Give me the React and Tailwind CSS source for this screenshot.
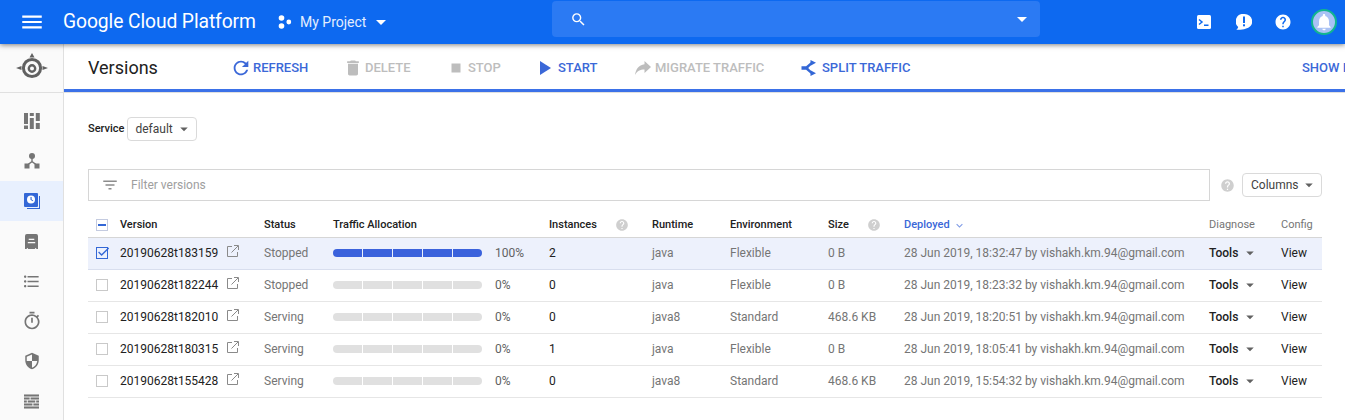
import { MdMenu, MdSearch, MdArrowDropDown, MdHelp, MdNotifications, MdRefresh, MdDelete, MdStop, MdPlayArrow, MdFilterList, MdFormatListBulleted, MdOutlineTimer, MdSecurity, MdCheck, MdKeyboardArrowDown } from "react-icons/md";

const versions = [
  { id: "20190628t183159", status: "Stopped", traffic: 100, inst: 2, runtime: "java", env: "Flexible", size: "0 B", date: "28 Jun 2019, 18:32:47", checked: true },
  { id: "20190628t182244", status: "Stopped", traffic: 0, inst: 0, runtime: "java", env: "Flexible", size: "0 B", date: "28 Jun 2019, 18:23:32" },
  { id: "20190628t182010", status: "Serving", traffic: 0, inst: 0, runtime: "java8", env: "Standard", size: "468.6 KB", date: "28 Jun 2019, 18:20:51" },
  { id: "20190628t180315", status: "Serving", traffic: 0, inst: 1, runtime: "java", env: "Flexible", size: "0 B", date: "28 Jun 2019, 18:05:41" },
  { id: "20190628t155428", status: "Serving", traffic: 0, inst: 0, runtime: "java8", env: "Standard", size: "468.6 KB", date: "28 Jun 2019, 15:54:32" },
];

const gridCols = "grid grid-cols-[32px_144px_69px_216px_103px_78px_98px_76px_305px_72px_41px] items-center";

function ProjectIcon() {
  return (
    <svg width="14" height="14" viewBox="0 0 14 14" fill="white">
      <circle cx="3.5" cy="3" r="2.8" />
      <circle cx="3.5" cy="11" r="2.8" />
      <circle cx="10.8" cy="7" r="2.4" />
    </svg>
  );
}

function TerminalIcon() {
  return (
    <svg width="14" height="14" viewBox="0 0 14 14">
      <rect width="14" height="14" rx="1.5" fill="white" />
      <path d="M2 4.5l3 2.5-3 2.5" fill="none" stroke="#0d69f0" strokeWidth="1.5" />
      <rect x="7" y="9.5" width="4.5" height="1.5" fill="#0d69f0" />
    </svg>
  );
}

function FeedbackIcon() {
  return (
    <svg width="16" height="16" viewBox="0 0 16 16">
      <path d="M8 0a8 7.4 0 0 1 1.5 14.7C7.5 15.6 4 16 0 15.8c1-.6 1.8-1.6 2.2-2.9A7.4 7.4 0 0 1 8 0z" fill="white" />
      <rect x="7" y="2.5" width="2" height="6.5" fill="#0d69f0" />
      <rect x="7" y="10.3" width="2" height="2" fill="#0d69f0" />
    </svg>
  );
}

function AppEngineLogo() {
  return (
    <svg width="34" height="30" viewBox="0 0 34 30" fill="#616161">
      <path d="M17 0l2.5 4.5h-5z" />
      <path d="M1 15l5.5-2v4z" />
      <path d="M33 15l-5.5-2v4z" />
      <circle cx="17" cy="15" r="8.6" fill="none" stroke="#616161" strokeWidth="3" />
      <circle cx="17" cy="15.5" r="3.2" fill="none" stroke="#616161" strokeWidth="2.4" />
    </svg>
  );
}

function DashboardIcon() {
  return (
    <svg width="16" height="16" viewBox="0 0 16 16" fill="#757575">
      <rect x="0" y="0" width="4" height="11" />
      <rect x="0" y="12.5" width="4" height="3.5" />
      <rect x="5.8" y="0" width="4" height="3" />
      <rect x="5.8" y="5" width="4" height="11" />
      <rect x="11.8" y="0" width="4" height="8" />
      <rect x="11.8" y="10" width="4" height="6" />
    </svg>
  );
}

function NodesIcon() {
  return (
    <svg width="16" height="16" viewBox="0 0 16 16" fill="#757575">
      <circle cx="8" cy="3" r="3" />
      <rect x="0.5" y="10.5" width="5" height="5" />
      <rect x="10.5" y="10.5" width="5" height="5" />
      <path d="M7.3 5h1.4v3.2l3.4 2.6-.9 1-3.2-2.4-3.2 2.4-.9-1 3.4-2.6z" />
    </svg>
  );
}

function VersionsIcon() {
  return (
    <svg width="16" height="16" viewBox="0 0 16 16">
      <path d="M15 3h1v13H3v-1h12z" fill="#3367d6" />
      <rect x="0" y="0" width="14" height="14" rx="1" fill="#3367d6" />
      <circle cx="7" cy="6.5" r="4" fill="white" />
      <path d="M6.5 4h1.1v2.4l1.7 1-.5.8-2.3-1.4z" fill="#3367d6" />
    </svg>
  );
}

function LogsIcon() {
  return (
    <svg width="13" height="15" viewBox="0 0 14 16" fill="#757575">
      <path d="M2 0h10a2 2 0 0 1 2 2v14h-1.6l-.9-1.2-1 1.2h-7l-1-1.2-.9 1.2H0V2a2 2 0 0 1 2-2z" />
      <rect x="4" y="5" width="6" height="1.4" fill="#fafafa" />
      <rect x="3" y="8.5" width="8" height="1.4" fill="#fafafa" />
    </svg>
  );
}

function WallIcon() {
  return (
    <svg width="15" height="15" viewBox="0 0 16 15" fill="#757575">
      <rect x="0" y="0" width="16" height="2.2" />
      <rect x="0" y="3.2" width="6" height="2.2" />
      <rect x="7" y="3.2" width="9" height="2.2" />
      <rect x="0" y="6.4" width="3" height="2.2" />
      <rect x="4" y="6.4" width="8" height="2.2" />
      <rect x="13" y="6.4" width="3" height="2.2" />
      <rect x="0" y="9.6" width="9" height="2.2" />
      <rect x="10" y="9.6" width="6" height="2.2" />
      <rect x="0" y="12.8" width="16" height="2.2" />
    </svg>
  );
}

function SplitIcon() {
  return (
    <svg width="16" height="16" viewBox="0 0 16 16" fill="#3367d6">
      <path d="M9.5 0L15 2.8 9.5 5.8z" />
      <path d="M9.5 10.2L15 13.2 9.5 16z" />
      <path d="M0.5 6.3h4.6l4.7-4 1.3 1.7L7.2 8l3.9 4-1.3 1.7-4.7-4H0.5z" />
    </svg>
  );
}

function MigrateIcon() {
  return (
    <svg width="16" height="14" viewBox="0 0 16 14" fill="#bdbdbd">
      <path d="M9.5 0L16 6l-6.5 6V8.4C5 8.4 2 10 0 14c.7-5.5 3.7-10.2 9.5-10.8z" />
    </svg>
  );
}

function ExternalIcon() {
  return (
    <svg width="12" height="12" viewBox="0 0 12 12" fill="none" stroke="#8a8a8a" strokeWidth="1" className="ml-[9px] mb-[3px]">
      <path d="M5 1.5H.5v10h10V7" />
      <path d="M4.5 7.5L11 1M7 .5h4.5V5" />
    </svg>
  );
}

function ActionButton({ icon, label, disabled, className }) {
  return (
    <div className={`flex items-center shrink-0 text-[13px] font-medium ${disabled ? "text-[#bdbdbd]" : "text-[#3b68d8]"} ${className}`}>
      {icon}
      <span>{label}</span>
    </div>
  );
}

function SideItem({ children, active }) {
  return (
    <div className={`h-10 shrink-0 flex items-center justify-center ${active ? "bg-[#e8f0fe]" : ""}`}>
      {children}
    </div>
  );
}

function TrafficBar({ percent, selected }) {
  const color = percent > 0 ? "bg-[#3b62dc]" : "bg-[#e0e0e0]";
  return (
    <div className={`flex w-[149px] h-2 rounded overflow-hidden gap-px ${selected ? "bg-[#edf1fc]" : "bg-white"}`}>
      {[0, 1, 2, 3, 4].map((i) => (
        <div key={i} className={`flex-1 ${color}`} />
      ))}
    </div>
  );
}

function Row({ v }) {
  return (
    <div className={`${gridCols} h-8 pb-[2px] border-b text-xs ${v.checked ? "bg-[#edf1fc] border-[#d8deee]" : "border-[#e6e6e6]"}`}>
      <div className="pl-2">
        {v.checked ? (
          <div className="relative w-3 h-3 border border-[#3367d6]">
            <MdCheck className="absolute -top-[4px] -left-[1px] text-[#3367d6]" size={15} />
          </div>
        ) : (
          <div className="w-3 h-3 border border-[#c9c9c9] bg-white" />
        )}
      </div>
      <div className="flex items-center text-[#212121]">
        {v.id}
        <ExternalIcon />
      </div>
      <div className="text-[#757575]">{v.status}</div>
      <div className="flex items-center">
        <TrafficBar percent={v.traffic} selected={v.checked} />
        <span className="ml-[13px] text-[#616161]">{v.traffic}%</span>
      </div>
      <div className="text-[#212121]">{v.inst}</div>
      <div className="text-[#757575]">{v.runtime}</div>
      <div className="text-[#757575]">{v.env}</div>
      <div className="text-[#757575]">{v.size}</div>
      <div className="text-[#757575] whitespace-nowrap">{v.date} by vishakh.km.94@gmail.com</div>
      <div className="flex items-center font-medium text-[#212121]">
        Tools
        <MdArrowDropDown size={18} className="ml-[3px] text-[#616161]" />
      </div>
      <div className="text-[#212121]">View</div>
    </div>
  );
}

export default function App() {
  return (
    <div className="w-[1345px] h-[420px] overflow-hidden bg-white font-['Roboto',sans-serif] flex flex-col">
      <header className="relative z-10 h-11 shrink-0 flex items-center bg-[#0d69f0] text-white shadow-[0_1px_5px_rgba(0,0,0,0.5)]">
        <MdMenu size={26} className="ml-[19px]" />
        <div className="ml-[18px] text-[19.3px] whitespace-nowrap tracking-[-0.1px] w-[193px]">Google Cloud Platform</div>
        <div className="ml-[22px] flex items-center w-[274px]">
          <ProjectIcon />
          <span className="ml-[8px] text-sm text-[#e3eefe]">My Project</span>
          <MdArrowDropDown size={24} className="ml-[3px]" />
        </div>
        <div className="w-[488px] h-[36px] -mt-[6px] rounded-sm bg-[#2b7af3] flex items-center pl-[18px] pr-[6px] justify-between">
          <MdSearch size={17} />
          <MdArrowDropDown size={24} />
        </div>
        <div className="flex-1 flex items-center justify-end pr-[8px]">
          <TerminalIcon />
          <div className="ml-[25px]"><FeedbackIcon /></div>
          <MdHelp size={18} className="ml-[22px]" />
          <div className="ml-[19px] w-[26px] h-[26px] rounded-full bg-[#a9c2f5] border-2 border-[#11b58f] flex items-center justify-center">
            <MdNotifications size={20} />
          </div>
        </div>
      </header>

      <div className="flex flex-1 min-h-0">
        <aside className="w-[64px] shrink-0 bg-[#fafafa] border-r border-[#e0e0e0] flex flex-col">
          <div className="h-[49px] shrink-0 mb-[8px] flex items-center justify-center border-b border-[#e0e0e0]">
            <AppEngineLogo />
          </div>
          <SideItem><DashboardIcon /></SideItem>
          <SideItem><NodesIcon /></SideItem>
          <SideItem active><VersionsIcon /></SideItem>
          <SideItem><LogsIcon /></SideItem>
          <SideItem><MdFormatListBulleted size={19} className="text-[#757575]" /></SideItem>
          <SideItem><MdOutlineTimer size={20} className="text-[#757575]" /></SideItem>
          <SideItem><MdSecurity size={18} className="text-[#757575]" /></SideItem>
          <SideItem><WallIcon /></SideItem>
        </aside>

        <main className="flex-1 min-w-0 flex flex-col">
          <div className="h-[48px] shrink-0 flex items-center border-b-[3px] border-[#3b71e8] shadow-[0_1px_0_#e0e0e0] pt-[2px] pl-6 whitespace-nowrap overflow-hidden">
            <div className="text-lg text-[#212121] w-[145px] shrink-0">Versions</div>
            <ActionButton icon={<MdRefresh size={22} className="-ml-[3px] mr-[1px]" />} label="REFRESH" className="w-[111px]" />
            <ActionButton disabled icon={<MdDelete size={20} className="-ml-[1px] mr-[2px]" />} label="DELETE" className="w-[103px]" />
            <ActionButton disabled icon={<MdStop size={18} className="mr-[3px]" />} label="STOP" className="w-[87px]" />
            <ActionButton icon={<MdPlayArrow size={24} className="-ml-[2px] mr-[2px]" />} label="START" className="w-[101px]" />
            <ActionButton disabled icon={<MigrateIcon />} label="MIGRATE TRAFFIC" className="w-[166px] gap-1" />
            <ActionButton icon={<SplitIcon />} label="SPLIT TRAFFIC" className="w-[501px] gap-[5px]" />
            <ActionButton label="SHOW INFO PANEL" />
          </div>

          <div className="pl-6 pr-[23px]">
            <div className="mt-[25px] flex items-center h-6">
              <span className="text-[11px] font-medium text-[#212121] mr-[3px]">Service</span>
              <div className="w-[70px] h-6 border border-[#dadada] rounded-sm flex items-center justify-between pl-[7px] pr-[3px] text-xs text-[#424242]">
                default
                <MdArrowDropDown size={18} className="text-[#616161]" />
              </div>
            </div>

            <div className="mt-[28px] flex items-center">
              <div className="w-[1122px] h-8 border border-[#d6d6d6] flex items-center pl-[12px] text-xs text-[#9e9e9e]">
                <MdFilterList size={18} className="text-[#8c8c8c]" />
                <span className="ml-[12px]">Filter versions</span>
              </div>
              <MdHelp size={15} className="ml-[10px] text-[#cfcfcf]" />
              <div className="ml-[7px] w-[80px] h-6 border border-[#dadada] rounded-sm flex items-center justify-between pl-2 pr-[3px] text-xs text-[#424242]">
                Columns
                <MdArrowDropDown size={18} className="text-[#616161]" />
              </div>
            </div>

            <div className={`${gridCols} mt-[7px] h-[30px] pt-[5px] border-b border-[#d6d6d6] text-[11px] font-medium text-[#212121]`}>
              <div className="pl-2">
                <div className="w-3 h-3 border border-[#c4cbe0] flex items-center justify-center">
                  <div className="w-2 h-[2px] bg-[#3367d6]" />
                </div>
              </div>
              <div>Version</div>
              <div>Status</div>
              <div>Traffic Allocation</div>
              <div className="flex items-center">
                Instances
                <MdHelp size={14} className="ml-[18px] text-[#cfcfcf]" />
              </div>
              <div>Runtime</div>
              <div>Environment</div>
              <div className="flex items-center">
                Size
                <MdHelp size={14} className="ml-[18px] text-[#cfcfcf]" />
              </div>
              <div className="flex items-center text-[#3b68d8]">
                Deployed
                <MdKeyboardArrowDown size={13} className="ml-[3px] text-[#7f9be6]" />
              </div>
              <div className="text-[#757575] font-normal">Diagnose</div>
              <div className="text-[#757575] font-normal">Config</div>
            </div>

            {versions.map((v) => (
              <Row key={v.id} v={v} />
            ))}
          </div>
        </main>
      </div>
    </div>
  );
}
